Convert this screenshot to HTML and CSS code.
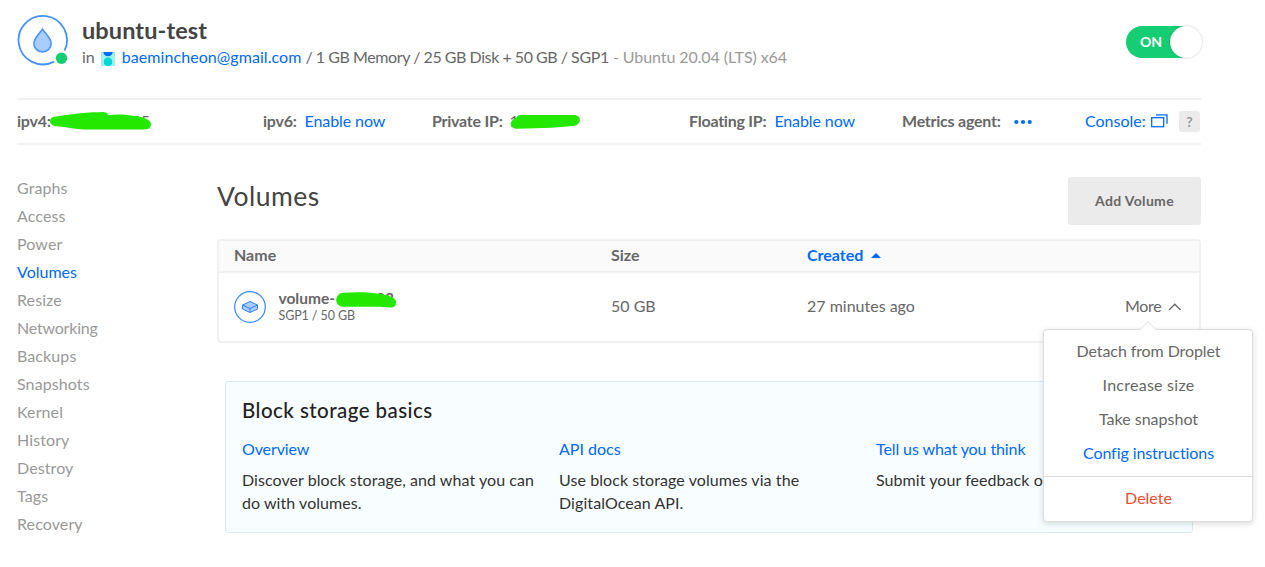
FILE: index.html
```html
<!DOCTYPE html>
<html lang="en">
<head>
<meta charset="utf-8">
<title>ubuntu-test - Volumes</title>
<link rel="stylesheet" href="styles.css">
</head>
<body>
<div class="page">
  <header class="droplet">
    <svg class="droplet-icon" width="52" height="52" viewBox="0 0 52 52">
      <path d="M47.6 35.6A24.2 24.2 0 1 0 37 46.6" fill="none" stroke="#4490ff" stroke-width="1.8"/>
      <path d="M25.500 14.200C22.500 18.300 16.800 23.400 16.800 28.400a8.700 8.500 0 0 0 17.400 0C34.200 23.400 28.500 18.300 25.500 14.200Z" fill="#a9cdff" stroke="#4a94ff" stroke-width="1.6"/>
      <circle cx="44.500" cy="43.200" r="5.700" fill="#15cd72"/>
    </svg>
    <div class="droplet-info">
      <h1 class="droplet-name">ubuntu-test</h1>
      <p class="droplet-meta">
        <span class="meta-in">in</span>
        <svg class="avatar" width="14" height="14" viewBox="0 0 14 14">
          <rect width="14" height="14" fill="#9ff0f0"/>
          <path d="M2.300 0h9.400a4.700 4.200 0 0 1-9.400 0Z" fill="#0069ff"/>
          <circle cx="7" cy="9.700" r="4.300" fill="#00d7d2"/>
        </svg>
        <a class="meta-mail">baemincheon@gmail.com</a>
        <span class="meta-spec">/ 1 GB Memory / 25 GB Disk + 50 GB / SGP1</span>
        <span class="meta-os">- Ubuntu 20.04 (LTS) x64</span>
      </p>
    </div>
    <div class="switch"><span class="switch-label">ON</span><span class="switch-knob"></span></div>
  </header>

  <div class="network">
    <div class="net-item net-v4"><b class="net-key">ipv4:</b><span class="net-tail">05</span>
      <svg class="scribble" width="104" height="22" viewBox="0 0 104 22"><path d="M6 5.500C14 4 23 3 30 2.200C39 1 47 1.200 53 .900C57 .600 58 4 59 4C68 3 77 3.500 85 5C94 6 101 9 101 13C101 18 97 18.500 92 18.500L34 18.500C22 18 14 15.500 6 15.200C-2 14.800-2 5.800 6 5.500Z" fill="#25e800"/></svg>
    </div>
    <div class="net-item"><b class="net-key">ipv6:</b><a class="net-link">Enable now</a></div>
    <div class="net-item net-private"><b class="net-key">Private IP:</b><span class="net-one">1</span>
      <svg class="scribble scribble-ip" width="72" height="18" viewBox="0 0 72 18"><path d="M9 2L64 2C72 2 72 12 63 13L42 14.800L7 15.800C-1 15.500-1 8 5 5.500Z" fill="#25e800"/></svg>
    </div>
    <div class="net-item"><b class="net-key">Floating IP:</b><a class="net-link">Enable now</a></div>
    <div class="net-item"><b class="net-key">Metrics agent:</b>
      <svg class="dots" width="18" height="6" viewBox="0 0 18 6" fill="#0069ff"><circle cx="2.300" cy="3" r="2.100"/><circle cx="9" cy="3" r="2.100"/><circle cx="15.700" cy="3" r="2.100"/></svg>
    </div>
    <div class="net-item"><a class="net-console">Console:</a>
      <svg class="console-icon" width="17" height="14" viewBox="0 0 17 14" fill="none" stroke="#0069ff" stroke-width="1.300"><rect x=".7" y="3.700" width="12" height="9"/><path d="M5 .8h11v9" /></svg>
      <span class="help">?</span>
    </div>
  </div>

  <div class="body">
    <nav class="side">
      <a>Graphs</a><a>Access</a><a>Power</a><a class="active">Volumes</a><a>Resize</a><a class="side-net">Networking</a><a>Backups</a><a>Snapshots</a><a>Kernel</a><a>History</a><a>Destroy</a><a>Tags</a><a>Recovery</a>
    </nav>
    <main class="main">
      <div class="title-row"><h2 class="title">Volumes</h2><button class="add">Add Volume</button></div>
      <div class="table">
        <div class="row head"><span>Name</span><span>Size</span><span class="sorted">Created<svg class="caret" width="10" height="5" viewBox="0 0 10 5"><path d="M0 5 5 0l5 5Z" fill="#0069ff"/></svg></span><span></span></div>
        <div class="row">
          <div class="volume">
            <svg width="32" height="32" viewBox="0 0 32 32" stroke-linejoin="round">
              <circle cx="16" cy="16" r="15.300" fill="none" stroke="#3788ff" stroke-width="1.200"/>
              <path d="M8.500 14 16 10.500l7.500 3.500v4L16 21.500 8.500 18Z" fill="#a9cdff" stroke="#2d81ff"/>
              <path d="M8.500 14 16 17.500l7.500-3.500M16 17.500v4" fill="none" stroke="#2d81ff"/>
            </svg>
            <div class="volume-text">
              <div class="volume-name">volume-<span class="volume-tail">03</span>
                <svg class="scribble scribble-volume" width="62" height="17" viewBox="0 0 62 17"><path d="M8 .800C20 0 32 0 42 1.500C50 2.500 61 4.500 61 10C61 15 58 16 54 15.500L45 14.800L8 14.800C-2 14 0 1.500 8 .800Z" fill="#25e800"/></svg>
              </div>
              <div class="volume-sub">SGP1 / 50 GB</div>
            </div>
          </div>
          <span class="cell">50 GB</span>
          <span class="cell">27 minutes ago</span>
          <div class="more"><span class="cell more-label">More</span><svg class="chevron" width="14" height="8" viewBox="0 0 14 8"><path d="M1 7 6.800 1.200 12.600 7" fill="none" stroke="#676767" stroke-width="1.300"/></svg>
            <div class="menu">
              <svg class="menu-tip" width="16" height="9" viewBox="0 0 16 9"><path d="M0 9 8 1l8 8Z" fill="#fff"/><path d="M.5 8 8 .7 15.500 8" fill="none" stroke="#ddd"/></svg>
              <a class="m-detach">Detach from Droplet</a><a class="m-size">Increase size</a><a>Take snapshot</a><a class="m-config">Config instructions</a>
              <a class="m-delete">Delete</a>
            </div>
          </div>
        </div>
      </div>
      <section class="basics">
        <h3 class="basics-title">Block storage basics</h3>
        <div class="basics-grid">
          <div><a class="basics-link b-tight">Overview</a><p>Discover block storage, and what you can<br>do with volumes.</p></div>
          <div><a class="basics-link">API docs</a><p class="b-wide">Use block storage volumes via the<br>DigitalOcean API.</p></div>
          <div><a class="basics-link b-tight">Tell us what you think</a><p>Submit your feedback on</p></div>
        </div>
      </section>
    </main>
  </div>
</div>
</body>
</html>
```
FILE: styles.css
```css
* { box-sizing: border-box; }
body { margin: 0; background: #fff; color: #676767; font: 16px/20px Lato, "Liberation Sans", sans-serif; font-variant-ligatures: none; overflow: hidden; }
h1, h2, h3, p { margin: 0; }
svg { display: block; flex: none; }
a, b, span { white-space: nowrap; }
.page { width: 1184px; height: 567px; margin-left: 17px; }

.droplet { display: flex; height: 98px; padding-top: 15px; }
.droplet-info { margin-left: 13px; }
.droplet-name { font-size: 23.5px; line-height: 30px; font-weight: 700; letter-spacing: .1px; color: #444; }
.droplet-meta { display: flex; align-items: center; margin-top: 2px; }
.avatar { margin: 3px 7px 0 6px; }
.meta-mail, .net-link, .net-console { color: #0069ff; }
.meta-mail { letter-spacing: .07px; }
.meta-spec { margin-left: 4px; letter-spacing: -.36px; word-spacing: -.3px; }
.meta-os { margin-left: 4px; color: #999; letter-spacing: -.08px; }
.switch { display: flex; align-items: center; justify-content: space-between; width: 72px; height: 32px; margin: 11px 3px 0 auto; padding-left: 14px; border-radius: 16px; background: #15cd72; }
.switch-label { color: #fff; font-size: 14px; font-weight: 700; }
.switch-knob { flex: none; width: 32px; height: 32px; margin-right: -4px; border-radius: 50%; background: #fff; box-shadow: 0 0 2px rgba(0,0,0,.25); }

.network { display: grid; grid-template-columns: 246px 169px 257px 213px 183px 1fr; align-items: center; height: 47px; border-top: 2px solid #f1f1f1; border-bottom: 2px solid #f1f1f1; }
.net-item { position: relative; display: flex; align-items: center; padding-bottom: 2px; }
.net-key { font-weight: 700; letter-spacing: -.24px; }
.net-link { margin-left: 8px; letter-spacing: -.1px; }
.net-tail { margin-left: 81px; }
.net-one { margin-left: 7px; }
.scribble { position: absolute; left: 33px; top: 0; }
.scribble-ip { left: 78px; top: 2px; }
.dots { margin: 3px 0 0 13px; }
.console-icon { margin: 0 0 0 5px; }
.help { width: 21px; height: 21px; margin: 1px 1px -1px auto; border-radius: 3px; background: #ebebeb; color: #999; font-size: 14px; font-weight: 700; line-height: 21px; text-align: center; }

.body { display: flex; }
.side { display: flex; flex-direction: column; width: 200px; padding-top: 29px; color: #999; line-height: 28px; letter-spacing: .1px; }
.side .active { color: #0069ff; letter-spacing: 0; }
.side .side-net { letter-spacing: -.2px; }
.main { width: 984px; padding-top: 32px; }
.title-row { display: flex; justify-content: space-between; }
.title { padding-top: 3px; font-size: 26.5px; line-height: 32px; font-weight: 400; letter-spacing: .5px; color: #444; }
.add { width: 133px; height: 48px; border: 0; border-radius: 3px; padding: 0 0 2px; background: #ebebeb; color: #676767; font: 700 14px Lato, sans-serif; letter-spacing: .35px; }
.table { height: 104px; margin-top: 14px; border: 2px solid #f1f1f1; border-radius: 4px; }
.row { display: grid; grid-template-columns: 377px 196px 1fr 57px; align-items: center; height: 68px; padding: 0 18px 0 15px; }
.row.head { height: 32px; border-bottom: 2px solid #f1f1f1; background: #fafafa; font-weight: 700; line-height: 18px; padding-bottom: 2px; }
.sorted { display: flex; align-items: center; color: #0069ff; }
.caret { margin: 1px 0 0 8px; }
.cell { padding-bottom: 2px; }
.volume { display: flex; }
.volume-text { margin: -1px 0 0 12.5px; }
.volume-name { position: relative; font-size: 15.5px; line-height: 17px; font-weight: 700; }
.volume-tail { margin-left: 41px; }
.scribble-volume { left: 56px; top: 2px; }
.volume-sub { font-size: 12.5px; line-height: 17px; letter-spacing: -.1px; }
.more { position: relative; display: flex; align-items: center; justify-content: space-between; }
.more-label { margin-left: 1px; letter-spacing: -.3px; }
.chevron { margin-right: -1px; }
.menu { position: absolute; left: -81px; top: 33px; width: 210px; height: 193px; padding-top: 4px; border: 1px solid #ddd; border-radius: 4px; background: #fff; box-shadow: 0 2px 6px rgba(0,0,0,.14); text-align: center; }
.menu-tip { position: absolute; left: 96px; top: -9px; }
.menu a { display: block; padding-left: 1px; line-height: 34px; }
.menu .m-detach { letter-spacing: -.1px; }
.menu .m-size { letter-spacing: .25px; }
.menu .m-config { color: #0069ff; letter-spacing: -.08px; }
.menu .m-delete { margin-top: 6px; padding-top: 4px; border-top: 1px solid #ddd; color: #ed4f32; }

.basics { height: 152px; margin: 38px 8px 0; padding: 15px 16px; border: 1px solid #dbe9f5; border-radius: 3px; background: #f8fdff; color: #333; }
.basics-title { font-size: 20.5px; line-height: 26px; font-weight: 500; letter-spacing: .45px; color: #222; }
.basics-grid { display: grid; grid-template-columns: 317px 317px 1fr; margin-top: 16px; }
.basics-link { display: block; color: #0069ff; line-height: 20px; }
.b-tight { letter-spacing: -.1px; }
.basics p { margin-top: 9px; line-height: 23px; white-space: nowrap; letter-spacing: .06px; }
.basics .b-wide { letter-spacing: .08px; }
```
